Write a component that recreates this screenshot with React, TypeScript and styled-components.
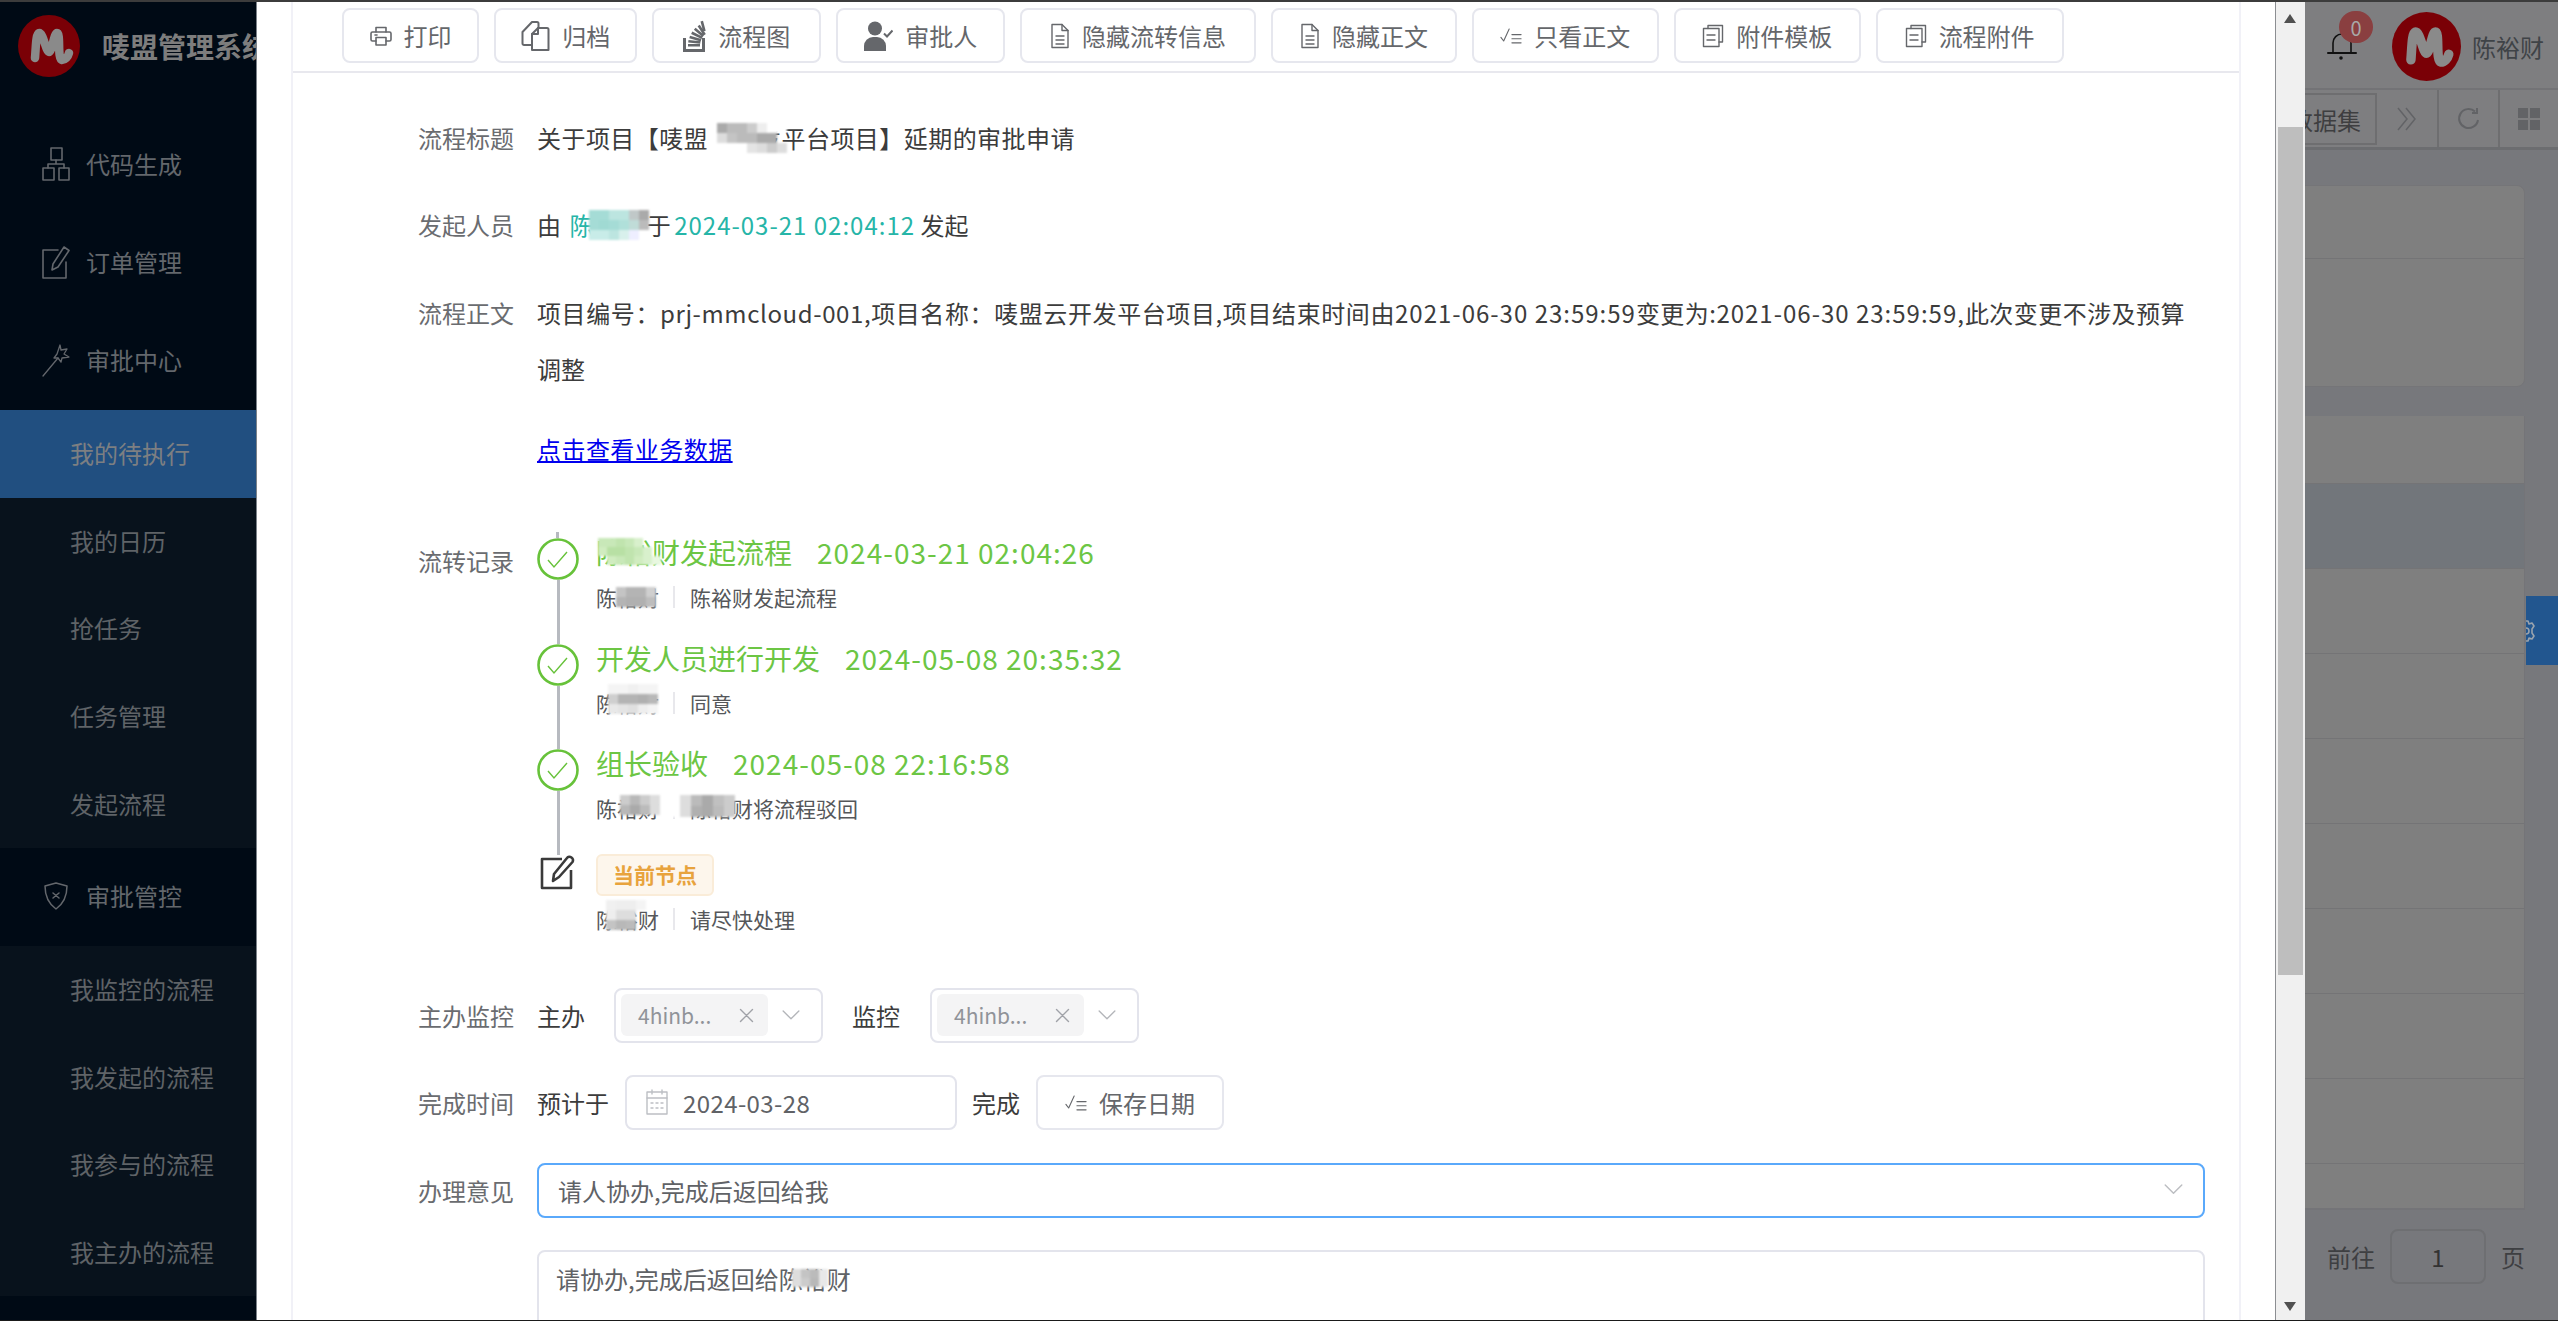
import React from 'react';
import styled, { createGlobalStyle } from 'styled-components';

const Global = createGlobalStyle`
  html, body { margin: 0; padding: 0; background: #77787c; }
  body { font-family: "Noto Sans CJK SC", "Noto Sans", sans-serif; font-size: 24px; overflow: hidden; }
  * { box-sizing: border-box; }
`;

const Page = styled.div`display:flex;flex-direction:column;width:2558px;height:1321px;overflow:hidden;`;
const TopStrip = styled.div`height:2px;background:#3c3c3c;flex:none;`;
const BottomStrip = styled.div`height:1px;background:#1a1a1a;flex:none;`;
const Main = styled.div`display:flex;flex:1;min-height:0;`;

/* Sidebar */
const Sidebar = styled.aside`width:257px;flex:none;background:#000a15;overflow:hidden;border-right:1px solid #7c8289;`;
const Brand = styled.div`height:114px;display:flex;align-items:flex-start;padding:13px 0 0 18px;gap:22px;`;
const BrandTitle = styled.div`font-size:28px;font-weight:700;color:#7d7d7d;white-space:nowrap;line-height:62px;`;
const MenuHead = styled.div`height:98px;display:flex;align-items:center;padding:0 0 2px 42px;gap:16px;color:#63676c;line-height:1;background:#000a15;svg{flex:none;}`;
const SubMenu = styled.div`background:#08121c;`;
const SubItem = styled.div<{ $active?: boolean }>`height:87.6px;display:flex;align-items:center;padding:0 0 2px 70px;color:${p => (p.$active ? '#7d7f82' : '#5f6367')};background:${p => (p.$active ? '#214f80' : 'transparent')};`;

/* Modal */
const Modal = styled.section`width:2048px;flex:none;display:flex;background:#fff;overflow:hidden;`;
const ModalScroll = styled.div`flex:1;min-width:0;padding-left:34px;padding-right:34px;overflow:hidden;`;
const Panel = styled.div`height:100%;border-left:2px solid #f1f1f7;border-right:2px solid #f1f1f7;overflow:hidden;`;
const Toolbar = styled.div`height:71px;padding:6px 0 0 49px;border-bottom:2px solid #e8e8ee;display:flex;gap:14.9px;align-items:flex-start;`;
const ToolButton = styled.div<{ $w: number }>`width:${p => p.$w}px;height:55px;border:2px solid #e6e7ee;border-radius:8px;display:flex;align-items:center;justify-content:center;gap:12px;color:#65676b;white-space:nowrap;background:#fff;`;
const Body = styled.div`padding:37px 34px 0 125px;color:#3c3c3c;`;
const Row = styled.div<{ $mb?: number }>`display:flex;align-items:flex-start;margin-bottom:${p => p.$mb ?? 32}px;line-height:56px;`;
const Label = styled.div<{ $mt?: number }>`width:119px;flex:none;color:#6a6c70;margin-top:${p => p.$mt ?? 0}px;`;
const Value = styled.div`flex:1;min-width:0;white-space:nowrap;`;
const Spaced = styled.span<{ $ls?: number }>`letter-spacing:${p => p.$ls ?? 0.45}px;`;
const Hide = styled.span`position:relative;display:inline-block;`;
const HideTight = styled(Hide)`margin-right:-2px;`;
const Teal = styled.span`color:#26b5a8;`;
const TealName = styled(Teal)`margin-left:3px;`;
const Nums = styled.span<{ $ls?: number }>`letter-spacing:${p => p.$ls ?? 1}px;`;
const Link = styled.a`color:#0000ee;text-decoration:underline;letter-spacing:.45px;`;

const MosaicBox = styled.span<{ $l: number; $t: number; $cols: number; $cell: number }>`position:absolute;left:${p => p.$l}px;top:${p => p.$t}px;display:grid;grid-template-columns:repeat(${p => p.$cols}, ${p => p.$cell}px);grid-auto-rows:${p => p.$cell}px;filter:blur(0.8px);pointer-events:none;`;
const MosaicCell = styled.span<{ $c: string }>`background:${p => p.$c};`;
const Mosaic = ({ l, t, cols, cell = 10, tones }: { l: number; t: number; cols: number; cell?: number; tones: string[] }) => (
  <MosaicBox $l={l} $t={t} $cols={cols} $cell={cell} aria-hidden>
    {tones.map((c, i) => <MosaicCell key={i} $c={c} />)}
  </MosaicBox>
);

/* Timeline */
const Timeline = styled.div`display:flex;flex-direction:column;line-height:1;`;
const Stub = styled.div`width:3px;height:6px;margin-left:19px;background:#b7bac0;`;
const Item = styled.div<{ $h: number }>`height:${p => p.$h}px;display:flex;`;
const NodeCol = styled.div`width:42px;flex:none;display:flex;flex-direction:column;align-items:center;margin-right:17px;`;
const Connector = styled.div`width:3px;flex:1;background:#b7bac0;`;
const ItemText = styled.div`display:flex;flex-direction:column;align-items:flex-start;`;
const ItemTitle = styled.div`font-size:28px;line-height:34px;margin-top:-3px;color:#6cc644;display:flex;gap:25px;white-space:nowrap;`;
const ItemSub = styled.div<{ $mt: number }>`font-size:21px;line-height:30px;margin-top:${p => p.$mt}px;color:#55575a;display:flex;white-space:nowrap;`;
const SubName = styled.span`position:relative;width:63px;`;
const SubRule = styled.span`display:block;width:2px;height:22px;background:#e8e8ec;margin:4px 15px 0 14px;`;
const NowTag = styled.div`width:118px;height:42px;margin-top:-1px;background:#fdf6ec;border:2px solid #faecd8;border-radius:6px;color:#e8a33d;font-size:21px;font-weight:700;display:flex;align-items:center;justify-content:center;`;

/* Form */
const FormRow = styled.div<{ $mb?: number }>`display:flex;align-items:center;height:55px;margin-bottom:${p => p.$mb ?? 32}px;white-space:nowrap;`;
const Inline = styled.span<{ $ml?: number }>`margin-left:${p => p.$ml ?? 0}px;color:#3c3c3c;`;
const FormLabel = styled.div`width:119px;flex:none;color:#6a6c70;`;
const Field = styled.div<{ $w: number; $ml: number }>`width:${p => p.$w}px;height:55px;margin-left:${p => p.$ml}px;border:2px solid #e3e4ec;border-radius:8px;display:flex;align-items:center;`;
const SelTag = styled.div`width:147px;height:42px;margin-left:5px;background:#f4f4f5;border-radius:6px;display:flex;align-items:center;color:#909399;font-size:21px;padding-left:17px;`;
const SelTagText = styled.span`width:101px;`;
const ChevronWrap = styled.span<{ $ml: number }>`display:flex;margin-left:${p => p.$ml}px;color:#b4b6ba;`;
const CrossWrap = styled.span`display:flex;color:#a0a2a8;`;
const DateText = styled.span`margin-left:15px;color:#606266;letter-spacing:.4px;`;
const DateIcon = styled.span`display:flex;margin-left:19px;color:#bdbfc4;`;
const SaveBtn = styled.div`width:188px;height:55px;margin-left:16px;border:2px solid #e6e7ee;border-radius:8px;display:flex;align-items:center;justify-content:center;gap:12px;color:#65676b;`;
const Opinion = styled.div`flex:1;height:55px;border:2px solid #5aa9fb;border-radius:8px;display:flex;align-items:center;justify-content:space-between;padding:0 20px 0 19px;color:#606266;`;
const OpinionChevron = styled.span`display:flex;color:#bcbec2;`;
const Memo = styled.div`margin-left:119px;height:200px;border:2px solid #e3e4ec;border-radius:8px;padding:8px 17px;line-height:38px;color:#606266;white-space:nowrap;`;
const MemoName = styled.span`position:relative;display:inline-block;`;

/* Scroll bar */
const Track = styled.div`width:30px;flex:none;background:#f0f0f0;border-left:1px solid #8c8e92;display:flex;flex-direction:column;`;
const ArrowUp = styled.div`width:0;height:0;margin:12px 0 0 8px;border-left:6px solid transparent;border-right:6px solid transparent;border-bottom:9px solid #505050;`;
const Thumb = styled.div`width:25px;height:848px;margin:104px 0 0 2px;background:#bebebe;`;
const ArrowDown = styled.div`width:0;height:0;margin:auto 0 9px 8px;border-left:6px solid transparent;border-right:6px solid transparent;border-top:9px solid #505050;`;

/* Right background page */
const Rest = styled.div`flex:1;min-width:0;position:relative;overflow:hidden;background:#77787c;display:flex;flex-direction:column;`;
const TopBar = styled.div`height:88px;flex:none;background:#7e7e80;border-bottom:2px solid #737376;position:relative;display:flex;align-items:flex-start;padding:10px 0 0 87px;gap:11px;`;
const Bell = styled.div`position:absolute;left:22px;top:30px;display:flex;color:#111;`;
const Badge = styled.div`position:absolute;left:34px;top:9px;width:34px;height:32px;border-radius:16px;background:#8a3f40;color:#a8a8a8;font-size:20px;display:flex;align-items:center;justify-content:center;`;
const UserName = styled.div`line-height:70px;color:#3f4347;white-space:nowrap;`;
const TabBar = styled.div`height:60px;flex:none;background:#7e7e80;border-bottom:3px solid #6c6d70;display:flex;`;
const TabLabel = styled.div`width:72px;height:52px;margin-top:3px;padding-right:14px;border-top:2px solid #6e6e70;border-bottom:2px solid #6e6e70;border-right:2px solid #6e6e70;overflow:hidden;display:flex;justify-content:flex-end;align-items:center;color:#3e3e40;white-space:nowrap;`;
const TabIcon = styled.div<{ $w: number }>`width:${p => p.$w}px;flex:none;display:flex;align-items:center;justify-content:center;border-right:2px solid #6e6e70;color:#626366;&:last-child{border-right:none;}`;
const RestBody = styled.div`flex:1;padding:35px 33px 0 0;`;
const Card = styled.div`margin-left:-20px;height:202px;background:#7f7f7f;border:1px solid #757578;border-radius:8px;`;
const CardHead = styled.div`height:73px;border-bottom:1px solid #747476;`;
const Table = styled.div`margin:29px 0 0 -20px;background:#7f7f7f;border-right:1px solid #747478;border-bottom:2px solid #747478;`;
const TRow = styled.div<{ $h: number; $hl?: boolean }>`height:${p => p.$h}px;background:${p => (p.$hl ? '#72767b' : 'transparent')};border-bottom:1px solid #747476;&:last-child{border-bottom:none;}`;
const Pager = styled.div`display:flex;align-items:center;gap:15px;margin:19px 0 0 22px;color:#3e3f42;`;
const PagerInput = styled.div`width:96px;height:55px;border:2px solid #6e6f72;border-radius:8px;display:flex;align-items:center;justify-content:center;color:#333;`;
const SettingTab = styled.div`position:absolute;right:0;top:594px;width:32px;height:69px;background:#22568f;overflow:hidden;display:flex;align-items:center;color:#9aa3ad;`;
const GearShift = styled.span`display:flex;margin-left:-12px;`;

/* Icons */
const S = (w: number, h: number, vb: string, children: React.ReactNode, sw = 1.4) => (
  <svg width={w} height={h} viewBox={vb} fill="none" stroke="currentColor" strokeWidth={sw} strokeLinecap="round" strokeLinejoin="round">{children}</svg>
);
const PrintIcon = () => S(22, 22, '0 0 22 22', <><path d="M6 7V2.500h10V7" /><path d="M6 16H2.500A1.500 1.500 0 0 1 1 14.500v-6A1.500 1.500 0 0 1 2.500 7h17A1.500 1.500 0 0 1 21 8.500v6a1.500 1.500 0 0 1-1.500 1.500H16" /><path d="M6 12.500h10v7.500H6z" /><path d="M5 10h2" /></>, 1.6);
const ArchiveIcon = () => S(29, 32, '0 0 29 32', <><path d="M11 25H3a1.500 1.500 0 0 1-1.500-1.500V12L11 2h5a1.500 1.500 0 0 1 1.500 1.500V8" /><path d="M11 30V14l6-6h9a1.500 1.500 0 0 1 1.500 1.500V30z" /><path d="M17 8v6h-6" /></>, 2);
const FlowIcon = () => (
  <svg width="23" height="32" viewBox="0 0 23 32" fill="currentColor">
    <path d="M0 18h3v11h16V18h3v14H0z" />
    <path d="M5 24h12v2.600H5zM5.500 20l12 1.200-.3 2.600-12-1.200zM7 15.800l11.400 3.200-.7 2.500L6.300 18.300zM9.300 11.600l10.400 5.200-1.100 2.300L8.100 13.900zM12.600 7.700l8.600 7.200-1.600 2-8.700-7.200zM16.800 4.800l6 9.300-2.100 1.400-6.100-9.300zM20 .8l2.700 10-2.500.7L17.500 1.500z" />
  </svg>
);
const UserCheckIcon = () => (
  <svg width="29" height="30" viewBox="0 0 29 30" fill="currentColor">
    <circle cx="11" cy="7.500" r="7" />
    <path d="M0 30v-5a9 9 0 0 1 9-9h4a9 9 0 0 1 9 9v5z" />
    <path d="M20 12.500l3 3 5.500-6" fill="none" stroke="currentColor" strokeWidth="2" />
  </svg>
);
const DocIcon = () => S(20, 26, '0 0 20 26', <><path d="M2 1.500h10l6 6V24.500H2z" /><path d="M12 1.500v6h6" /><path d="M6 13h8M6 17h8M6 21h8" /></>);
const CheckList = () => S(22, 17, '0 0 24 18', <><path d="M1 11l3 4 6-13" /><path d="M13 8h10M13 12.500h10M13 17h10" /></>, 1.2);
const AttachIcon = () => S(22, 24, '0 0 22 24', <><path d="M6 4.500V1.500h14.500V18H17" /><path d="M1.500 4.500h15.500v18H1.500z" /><path d="M5 11h8M5 16h8" /></>);
const CheckCircle = () => (
  <svg width="42" height="42" viewBox="0 0 42 42" fill="none" stroke="#67c23a">
    <circle cx="21" cy="21" r="19.500" strokeWidth="2.600" />
    <path d="M11 22l6 7 13-15" strokeWidth="1.400" />
  </svg>
);
const EditBig = () => (
  <svg width="36" height="35" viewBox="0 0 36 35" fill="none" stroke="#3a3a3a" strokeWidth="2.600" strokeLinejoin="round">
    <path d="M22 4H2v29h29V15" />
    <path d="M13 26l1-7L27 3c1-1.500 3-1.500 4.500-.5s2 3 1 4.500L19 22z" />
  </svg>
);
const SitemapIcon = () => S(28, 34, '0 0 28 34', <><rect x="9" y="1" width="11" height="12" /><rect x="1" y="21" width="11" height="12" /><rect x="17" y="21" width="10" height="12" /><path d="M14 13v4M6 21v-4h16v4" /></>, 1.6);
const PenIcon = () => S(28, 34, '0 0 28 34', <><path d="M16 5H1v28h23V17" /><path d="M10 25l1-6L22 2l5 3.500L16 22z" /></>, 1.6);
const WandIcon = () => S(28, 34, '0 0 28 34', <><path d="M1 33l15-18" /><path d="M18 2l1 5 6-1-3 5 5 3-7 1-1 4-3-4-4 0 3-4z" /></>, 1.3);
const ShieldIcon = () => S(28, 28, '0 0 28 28', <><path d="M14 1l11 3c0 11-4 18-11 23C7 22 3 15 3 4z" /><path d="M11 11l6 5M17 11l-6 5" /></>, 1.5);
const Chevron = ({ size = 18 }: { size?: number }) => S(size, size * 0.6, '0 0 18 11', <path d="M1 1l8 8 8-8" />);
const CrossIcon = () => S(15, 15, '0 0 15 15', <path d="M1.500 1.500l12 12M13.500 1.500l-12 12" />);
const CalendarIcon = () => S(22, 26, '0 0 22 26', <><rect x="1" y="3" width="20" height="22" /><path d="M1 9h20M6 1v4M16 1v4M5 14h2M10 14h2M15 14h2M5 19h2M10 19h2M15 19h2" /></>);
const BellIcon = () => S(30, 28, '0 0 30 28', <><path d="M6 21V11a9 9 0 0 1 18 0v10" /><path d="M1 21h28" strokeWidth="2" /><circle cx="14" cy="26" r="1" fill="currentColor" /></>, 1.6);
const Logo = ({ size }: { size: number }) => (
  <svg width={size} height={size} viewBox="0 0 62 62" style={{ flex: 'none' }}>
    <circle cx="31" cy="31" r="31" fill="#7a0006" />
    <path d="M17 43C18 30 18 19 21 18C25 17 28 37 31 37C34 37 36 18 39 18C43 18 39 44 44 45C47 45 50 42 51 38" fill="none" stroke="#8a8a8a" strokeWidth="8.500" strokeLinecap="round" strokeLinejoin="round" />
  </svg>
);
const GearIcon = () => S(24, 24, '0 0 24 24', <><path d="M10 2h4l1 3 3-1 2 3-2 3v4l2 3-2 3-3-1-1 3h-4l-1-3-3 1-2-3 2-3v-4L4 7l2-3 3 1z" /><circle cx="12" cy="12" r="3" /></>, 1.6);

const tools: { w: number; text: string; icon: React.ReactNode }[] = [
  { w: 137, text: '打印', icon: <PrintIcon /> },
  { w: 143.5, text: '归档', icon: <ArchiveIcon /> },
  { w: 169, text: '流程图', icon: <FlowIcon /> },
  { w: 169, text: '审批人', icon: <UserCheckIcon /> },
  { w: 236, text: '隐藏流转信息', icon: <DocIcon /> },
  { w: 186, text: '隐藏正文', icon: <DocIcon /> },
  { w: 187, text: '只看正文', icon: <CheckList /> },
  { w: 187, text: '附件模板', icon: <AttachIcon /> },
  { w: 188, text: '流程附件', icon: <AttachIcon /> },
];
const G = ['#c4c4c4', '#b4b4b4', '#cfcfcf', '#bdbdbd', '#d6d6d6', '#b0b0b0'];

export default function App() {
  return (
    <Page>
      <Global />
      <TopStrip />
      <Main>
        <Sidebar>
          <Brand><Logo size={62} /><BrandTitle>唛盟管理系统</BrandTitle></Brand>
          <MenuHead><SitemapIcon />代码生成</MenuHead>
          <MenuHead><PenIcon />订单管理</MenuHead>
          <MenuHead><WandIcon />审批中心</MenuHead>
          <SubMenu>
            <SubItem $active>我的待执行</SubItem>
            <SubItem>我的日历</SubItem>
            <SubItem>抢任务</SubItem>
            <SubItem>任务管理</SubItem>
            <SubItem>发起流程</SubItem>
          </SubMenu>
          <MenuHead><ShieldIcon />审批管控</MenuHead>
          <SubMenu>
            <SubItem>我监控的流程</SubItem>
            <SubItem>我发起的流程</SubItem>
            <SubItem>我参与的流程</SubItem>
            <SubItem>我主办的流程</SubItem>
          </SubMenu>
        </Sidebar>

        <Modal>
          <ModalScroll>
            <Panel>
              <Toolbar>
                {tools.map(t => <ToolButton key={t.text} $w={t.w}>{t.icon}{t.text}</ToolButton>)}
              </Toolbar>
              <Body>
                <Row $mb={31}>
                  <Label>流程标题</Label>
                  <Value>
                    <Hide><Spaced>关于项目【唛盟云开发平台项目】延期的审批申请</Spaced>
                      <Mosaic l={170} t={13} cols={8} tones={['#fff', '#aaa', '#bbb', '#bbb', '#ccc', '#eee', '#fff', '#fff', '#fff', '#ddd', '#c4c4c4', '#bbb', '#bbb', '#aaa', '#aaa', '#fff0', '#fff', '#fff', '#fff', '#fff', '#e4e4e4', '#ddd', '#ccc', '#ddd']} />
                    </Hide>
                  </Value>
                </Row>
                <Row>
                  <Label>发起人员</Label>
                  <Value>
                    <HideTight>由 <TealName>陈裕财</TealName> 于<Mosaic l={52} t={13} cols={6} tones={['#a5dcd6', '#a5dcd6', '#bce5e0', '#bce5e0', '#c0c8c8', '#aaa', '#a5dcd6', '#a0dad3', '#a5dcd6', '#b0e0da', '#c0dcd8', '#bbb', '#c8ece8', '#c8ece8', '#bce5e0', '#d8f0ec', '#eef', '#fff']} /></HideTight>
                    {' '}<Teal><Nums>2024-03-21 02:04:12</Nums></Teal> 发起
                  </Value>
                </Row>
                <Row $mb={24}>
                  <Label>流程正文</Label>
                  <Value>
                    <Spaced $ls={0.6}>项目编号：prj-mmcloud-001,项目名称：唛盟云开发平台项目,项目结束时间由</Spaced><Nums>2021-06-30 23:59:59</Nums><Spaced>变更为:</Spaced><Nums>2021-06-30 23:59:59,</Nums><Spaced>此次变更不涉及预算</Spaced><br />调整
                  </Value>
                </Row>
                <Row $mb={55}>
                  <Label />
                  <Value><Link href="#">点击查看业务数据</Link></Value>
                </Row>
                <Row $mb={51}>
                  <Label $mt={1}>流转记录</Label>
                  <Timeline>
                    <Stub />
                    <Item $h={105.5}>
                      <NodeCol><CheckCircle /><Connector /></NodeCol>
                      <ItemText>
                        <ItemTitle>
                          <Hide>陈裕财发起流程<Mosaic l={2} t={3} cols={7} cell={9} tones={['#c8e8b8', '#c8e8b8', '#c0e4ae', '#c8e8b8', '#d8f0cc', '#fff0', '#fff0', '#d0ecc0', '#b8e0a4', '#b8e0a4', '#c0e4ae', '#c8e8b8', '#d8f0cc', '#fff0', '#fff0', '#d0ecc0', '#c8e8b8', '#c0e4ae', '#d0ecc0', '#d8f0cc', '#e8f8e0']} /></Hide>
                          <Nums>2024-03-21 02:04:26</Nums>
                        </ItemTitle>
                        <ItemSub $mt={13}>
                          <SubName>陈裕财<Mosaic l={20} t={5} cols={4} tones={[G[0], G[1], G[1], G[2], G[1], G[5], G[5], G[3]]} /></SubName>
                          <SubRule />陈裕财发起流程
                        </ItemSub>
                      </ItemText>
                    </Item>
                    <Item $h={105.5}>
                      <NodeCol><CheckCircle /><Connector /></NodeCol>
                      <ItemText>
                        <ItemTitle>开发人员进行开发<Nums>2024-05-08 20:35:32</Nums></ItemTitle>
                        <ItemSub $mt={13}>
                          <SubName>陈裕财<Mosaic l={12} t={-4} cols={5} tones={['#f4f4f4', '#f4f4f4', '#f0f0f0', '#f4f4f4', '#f4f4f4', '#cfcfcf', '#b4b4b4', '#b4b4b4', '#b0b0b0', '#b8b8b8', '#e8e8e8', '#e4e4e4', '#e0e0e0', '#eeeeee', '#f4f4f4']} cell={10} /></SubName>
                          <SubRule />同意
                        </ItemSub>
                      </ItemText>
                    </Item>
                    <Item $h={105.5}>
                      <NodeCol><CheckCircle /><Connector /></NodeCol>
                      <ItemText>
                        <ItemTitle>组长验收<Nums>2024-05-08 22:16:58</Nums></ItemTitle>
                        <ItemSub $mt={13}>
                          <SubName>陈裕财<Mosaic l={24} t={2} cols={4} tones={['#ccc', '#b8b8b8', '#ccc', '#ddd', '#b8b8b8', '#aaa', '#bbb', '#ddd']} cell={10} /></SubName>
                          <Hide><SubRule />
                            <Mosaic l={10} t={2} cols={6} tones={['#fff', '#ddd', '#bbb', '#aaa', '#c0c0c0', '#ccc', '#fff', '#ddd', '#b0b0b0', '#aaa', '#bbb', '#ccc']} cell={11} />
                          </Hide>陈裕财将流程驳回
                        </ItemSub>
                      </ItemText>
                    </Item>
                    <Item $h={82}>
                      <NodeCol><EditBig /></NodeCol>
                      <ItemText>
                        <NowTag>当前节点</NowTag>
                        <ItemSub $mt={8}>
                          <SubName>陈裕财<Mosaic l={10} t={-4} cols={4} tones={['#f0f0f0', '#eee', '#eee', '#f4f4f4', '#eee', '#ddd', '#ddd', '#fff0', '#c4c4c4', '#b8b8b8', '#bbb', '#fff0']} /></SubName>
                          <SubRule />请尽快处理
                        </ItemSub>
                      </ItemText>
                    </Item>
                  </Timeline>
                </Row>
                <FormRow>
                  <FormLabel>主办监控</FormLabel>
                  <Inline>主办</Inline>
                  <Field $w={209} $ml={29}>
                    <SelTag><SelTagText>4hinb...</SelTagText><CrossWrap><CrossIcon /></CrossWrap></SelTag>
                    <ChevronWrap $ml={14}><Chevron /></ChevronWrap>
                  </Field>
                  <Inline $ml={29}>监控</Inline>
                  <Field $w={209} $ml={30}>
                    <SelTag><SelTagText>4hinb...</SelTagText><CrossWrap><CrossIcon /></CrossWrap></SelTag>
                    <ChevronWrap $ml={14}><Chevron /></ChevronWrap>
                  </Field>
                </FormRow>
                <FormRow $mb={33}>
                  <FormLabel>完成时间</FormLabel>
                  <Inline>预计于</Inline>
                  <Field $w={332} $ml={16}>
                    <DateIcon><CalendarIcon /></DateIcon>
                    <DateText>2024-03-28</DateText>
                  </Field>
                  <Inline $ml={15}>完成</Inline>
                  <SaveBtn><CheckList />保存日期</SaveBtn>
                </FormRow>
                <FormRow>
                  <FormLabel>办理意见</FormLabel>
                  <Opinion>请人协办,完成后返回给我<OpinionChevron><Chevron size={19} /></OpinionChevron></Opinion>
                </FormRow>
                <Memo>
                  请协办,完成后返回给<MemoName>陈裕财<Mosaic l={13} t={9} cols={4} cell={9} tones={['#ddd', '#c4c4c4', '#bbb', '#e8e8e8', '#ddd', '#ccc', '#b8b8b8', '#e8e8e8']} /></MemoName>
                </Memo>
              </Body>
            </Panel>
          </ModalScroll>
          <Track>
            <ArrowUp />
            <Thumb />
            <ArrowDown />
          </Track>
        </Modal>

        <Rest>
          <TopBar>
            <Bell><BellIcon /></Bell>
            <Badge>0</Badge>
            <Logo size={69} />
            <UserName>陈裕财</UserName>
          </TopBar>
          <TabBar>
            <TabLabel>数据集</TabLabel>
            <TabIcon $w={62}><svg width="20" height="24" viewBox="0 0 20 24" fill="none" stroke="currentColor" strokeWidth="1.500"><path d="M1 1l9 11-9 11M9 1l9 11-9 11" /></svg></TabIcon>
            <TabIcon $w={61}><svg width="24" height="24" viewBox="0 0 24 24" fill="none" stroke="currentColor" strokeWidth="2"><path d="M21 13a9.500 9.500 0 1 1-3-8.500M20 1v5h-5" /></svg></TabIcon>
            <TabIcon $w={58}><svg width="22" height="22" viewBox="0 0 22 22" fill="currentColor"><rect width="10" height="10" /><rect x="12" width="10" height="10" /><rect y="12" width="10" height="10" /><rect x="12" y="12" width="10" height="10" /></svg></TabIcon>
          </TabBar>
          <RestBody>
            <Card><CardHead /></Card>
            <Table>
              <TRow $h={68} />
              <TRow $h={85} $hl />
              {[0, 1, 2, 3, 4, 5, 6].map(i => <TRow key={i} $h={85} />)}
              <TRow $h={44} />
            </Table>
            <Pager>前往<PagerInput>1</PagerInput>页</Pager>
          </RestBody>
          <SettingTab><GearShift><GearIcon /></GearShift></SettingTab>
        </Rest>
      </Main>
      <BottomStrip />
    </Page>
  );
}
